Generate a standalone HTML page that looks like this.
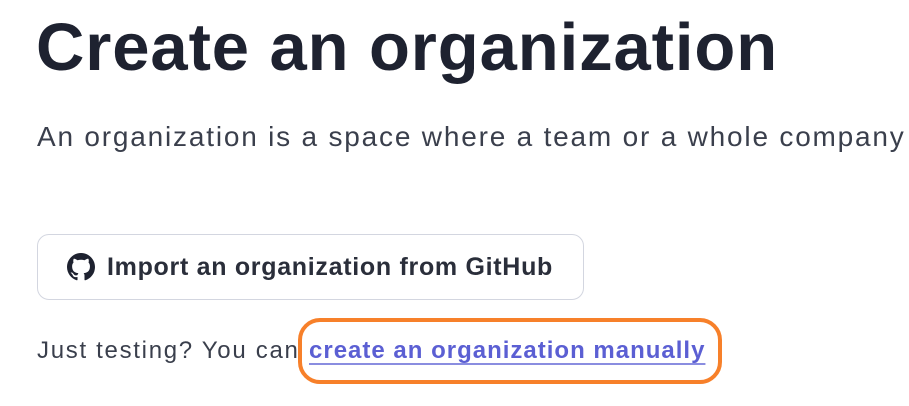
<!DOCTYPE html>
<html><head><meta charset="utf-8"><style>
body{margin:0;width:909px;height:406px;background:#fff;overflow:hidden;position:relative;font-family:"Liberation Sans",sans-serif;color:#1e2230}
.t{position:absolute;left:36px;top:8px;font-size:67px;font-weight:bold;letter-spacing:0.9px;line-height:80px;white-space:nowrap}
.s{position:absolute;left:37px;top:120px;font-size:28px;line-height:34px;color:#3a3f4c;white-space:nowrap;letter-spacing:1.8px}
.b{position:absolute;left:37px;top:234px;width:547px;height:66px;border:1.5px solid #d3d6e0;border-radius:12px;box-sizing:border-box}
.b svg{position:absolute;left:29px;top:18px}
.b span{position:absolute;left:69px;top:18px;font-size:25px;font-weight:bold;line-height:28px;white-space:nowrap;color:#2a2e3a;letter-spacing:0.7px}
.j{position:absolute;left:37px;top:337px;font-size:24px;line-height:28px;white-space:nowrap;color:#3a3f4c;letter-spacing:1.7px}
.j a{position:absolute;left:272px;top:0;color:#5b5fd3;font-weight:bold;text-decoration:underline;text-decoration-color:#8a8de0;text-underline-offset:5px;letter-spacing:1px}
.o{position:absolute;left:298px;top:318px;width:424px;height:66px;border:4px solid #f7802a;border-radius:22px;box-sizing:border-box}
</style></head><body>
<div class="t">Create an organization</div>
<div class="s">An organization is a space where a team or a whole company</div>
<div class="b"><svg width="28" height="28" viewBox="0 0 16 16"><path fill="#1e2230" d="M8 0C3.58 0 0 3.58 0 8c0 3.540 2.29 6.53 5.47 7.59.4.07.55-.17.55-.38 0-.19-.01-.82-.01-1.49-2.01.37-2.530-.49-2.690-.94-.09-.23-.48-.94-.82-1.130-.28-.15-.68-.52-.01-.53.63-.01 1.080.58 1.230.82.72 1.21 1.870.87 2.330.66.07-.52.28-.87.51-1.07-1.78-.2-3.64-.89-3.64-3.95 0-.87.31-1.59.82-2.15-.08-.2-.36-1.02.08-2.12 0 0 .67-.21 2.2.82.64-.18 1.32-.27 2-.27.68 0 1.36.09 2 .27 1.53-1.04 2.2-.82 2.2-.82.44 1.1.16 1.92.08 2.12.51.56.82 1.27.82 2.15 0 3.07-1.870 3.75-3.65 3.95.29.25.54.73.54 1.48 0 1.07-.01 1.93-.01 2.2 0 .21.15.46.55.38A8.013 8.013 0 0016 8c0-4.42-3.58-8-8-8z"/></svg><span>Import an organization from GitHub</span></div>
<div class="j">Just testing? You can<a>create an organization manually</a></div>
<div class="o"></div>
</body></html>
